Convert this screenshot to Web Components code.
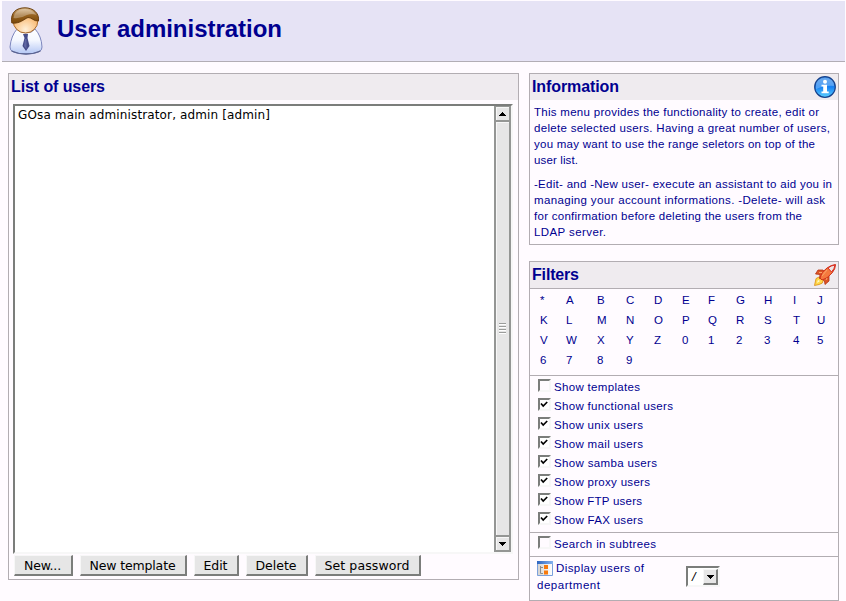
<!DOCTYPE html>
<html lang="en"><head><meta charset="utf-8"><title>User administration</title>
<style>
body{margin:0;width:846px;height:601px;overflow:hidden;background:#fffbff;color:#000090;font:11.5px/16px "Liberation Sans",Arial,sans-serif}
</style></head><body><admin-page></admin-page>
<script>
const make=(name,html,init)=>customElements.define(name,class extends HTMLElement{
  connectedCallback(){
    if(this.shadowRoot)return;
    this.attachShadow({mode:'open'}).innerHTML=html;
    if(init)init.call(this,this.shadowRoot);
  }
});

// One line of text, tracked so that it spans exactly `w` pixels.
make('fit-text','<style>:host{display:block;white-space:nowrap}span{display:inline-block}</style><span><slot></slot></span>',function(r){
  const s=r.querySelector('span'),n=this.textContent.length;
  s.style.letterSpacing='0px';
  const w=s.getBoundingClientRect().width;
  s.style.letterSpacing=((+this.getAttribute('w')-w)/Math.max(1,n-1))+'px';
});

make('user-icon',`<style>:host,svg{display:block}</style><svg width="36" height="48" viewBox="0 0 36 48">
<defs><linearGradient id="b" x1="0" y1="0" x2="0" y2="1"><stop offset="0" stop-color="#fff"/><stop offset=".45" stop-color="#f4f7ff"/><stop offset="1" stop-color="#b3c6f4"/></linearGradient>
<radialGradient id="f" cx=".5" cy=".85" r=".7"><stop offset="0" stop-color="#fff0d8"/><stop offset="1" stop-color="#f8ae5c"/></radialGradient>
<linearGradient id="h" x1="0" y1="0" x2="0" y2="1"><stop offset="0" stop-color="#d9b888"/><stop offset=".5" stop-color="#96621f"/><stop offset="1" stop-color="#7a4708"/></linearGradient></defs>
<path d="M8 22Q2 29 1 40Q.5 43 4.500 45Q9 47 17 47Q25 47 29.500 45Q33.500 43 33 40Q32.500 29 26 22Q23 26 17 26Q12 26 8 22Z" fill="url(#b)" stroke="#7c86bd" stroke-width="1"/>
<path d="M2.500 44Q9 47 17 47Q25 47 31.500 44" fill="none" stroke="#5b638f" stroke-width="1.300"/>
<path d="M14 27H19L18.500 31L20.500 39L17 44L13.500 39L15.500 31Z" fill="#454c88"/><path d="M16 32L17.500 32L17.500 42L15 39Z" fill="#6068a4"/>
<ellipse cx="16.500" cy="14" rx="12.300" ry="12" fill="url(#f)" stroke="#a96a29"/>
<path d="M2.800 16C1 5 8 .8 16 .8C24 .8 30.500 6 29.500 14C25 14.500 22 10 19 10.500C15 12 11 17 2.800 16Z" fill="url(#h)" stroke="#6b400f"/>
<path d="M5.500 7Q9 2 16 2Q23 2 27.500 8Q23 6 18 8Q11 12 4.500 11Z" fill="#fff" opacity=".3"/></svg>`);

make('info-icon',`<style>:host,svg{display:block}</style><svg width="22" height="22" viewBox="0 0 22 22"><defs><linearGradient id="g" x1="0" y1="0" x2="0" y2="1"><stop offset="0" stop-color="#3f8fe8"/><stop offset=".5" stop-color="#1680f2"/><stop offset="1" stop-color="#5bd0ff"/></linearGradient></defs>
<circle cx="11" cy="11" r="10.300" fill="url(#g)" stroke="#15418c" stroke-width="1.200"/>
<path d="M2 10Q2 2 11 2Q20 2 20 10Q12 9 2 13Z" fill="#fff" opacity=".25"/>
<circle cx="11" cy="5.700" r="2" fill="#fff"/><path d="M7.500 8.700H13V15.500H14.700V17.200H7.500V15.500H9.200V10.400H7.500Z" fill="#fff"/></svg>`);

make('rocket-icon',`<style>:host,svg{display:block}</style><svg width="22" height="22" viewBox="0 0 22 22">
<path d="M5 13Q1 14 1.500 17L.5 21.500L5 20.500Q9 20 9.500 16Z" fill="#ffd84a" stroke="#d88b12" stroke-width=".8"/><path d="M4 16L3 19L6 17Z" fill="#fffbd0"/>
<path d="M9 6L4 6L1.500 10L6 10.500L5.500 14.500L8 15L10.500 17L11 20.500L15 17L15 12Z" fill="#dd5526" stroke="#b33213" stroke-width=".8"/>
<path d="M6 14Q7 8 13 4Q17 1 21.500 .5Q21.500 5 18 9Q13 15 8 16Z" fill="#f5793e" stroke="#ce2f1b"/>
<path d="M14 4Q17 1.500 21 1Q20.500 5 17.500 8Z" fill="#eee5e5" stroke="#d92b20"/><path d="M8 12L13 6M5 8.500L8 8.500M12 16L13 14" stroke="#f9a56a" stroke-width="1"/></svg>`);

make('tree-icon',`<style>:host,svg{display:block}</style><svg width="16" height="16" viewBox="0 0 16 16"><defs><linearGradient id="t"><stop stop-color="#2d65c0"/><stop offset="1" stop-color="#86b3ee"/></linearGradient><linearGradient id="p"><stop stop-color="#d4d2d0"/><stop offset="1" stop-color="#fff"/></linearGradient></defs>
<path d="M.5 .5H15.500V14.500H.5Z" fill="url(#p)" stroke="#7ba0dc"/><path d="M0 0H16V3H0Z" fill="url(#t)"/>
<path d="M3.500 5V12.500H6M3.500 6.500H6" fill="none" stroke="#8c8c8c"/><path d="M7 4H11V8H7ZM7 9.500H11V13.500H7Z" fill="#f7790c"/></svg>`);

make('page-header',`<style>:host{display:flex;align-items:flex-start;box-sizing:border-box;height:61px;margin:0 1px 0 2px;padding:6px 0 0 7px;background:#e6e3f5;border-bottom:1px solid #b2adb5}
fit-text{font:bold 24px/30px "Liberation Sans",Arial,sans-serif;margin:7px 0 0 12px}</style><user-icon></user-icon><fit-text w="225">User administration</fit-text>`);

make('titled-panel',`<style>:host{display:flex;flex-direction:column;box-sizing:border-box;border:1px solid #b2adb2}
header{display:flex;justify-content:space-between;align-items:center;height:26px;box-sizing:border-box;padding:0 2px;background:#efebef;font:bold 16px/20px "Liberation Sans",Arial,sans-serif;flex:none}
:host([ruled]) header{height:27px;border-bottom:1px solid #b2adb2}</style><header><slot name="title"></slot><slot name="icon"></slot></header><slot></slot>`);

make('push-button',`<style>:host{display:flex;align-items:center;justify-content:center;box-sizing:border-box;height:21px;border:solid;border-width:1px 2px 2px 1px;border-color:#f7f7f7 #7b7d7b #7b7d7b #f7f7f7;background:#e6e6e6;color:#000;font:12.5px/17px "DejaVu Sans",sans-serif;padding-right:1px}</style><slot></slot>`);

make('scroll-bar',`<style>:host{display:flex;flex-direction:column;width:17px;box-sizing:border-box;border:solid #949694;border-width:0 2px 2px;background:#949694;gap:2px;padding-top:1px}
div{background:#e6e6e6;box-shadow:inset 1px 1px #f7f7f7;display:flex;align-items:center;justify-content:center}
.b{height:13px;flex:none}.t{flex:1;flex-direction:column;gap:1px;padding-top:2px}svg{display:block}.t i{width:7px;height:1px;background:#9a9c9a;border-bottom:1px solid #fff;margin-top:-1px;margin-bottom:1px}</style>
<div class="b"><svg width="7" height="4"><path d="M3 0H4V1H5V2H6V3H7V4H0V3H1V2H2V1H3Z"/></svg></div><div class="t"><i></i><i></i><i></i><i></i></div><div class="b"><svg width="7" height="4"><path d="M0 0H7V1H6V2H5V3H4V4H3V3H2V2H1V1H0Z"/></svg></div>`);

make('user-list',`<style>:host{display:flex;justify-content:space-between;box-sizing:border-box;height:450px;margin:4px 5px 0 4px;border:2px solid;border-color:#7b7d7b #f7f7f7 #f7f7f7 #7b7d7b;background:#fff;color:#000;font:12px/16px "DejaVu Sans",sans-serif}
fit-text{padding:1px 0 0 3px}</style><slot></slot><scroll-bar></scroll-bar>`,function(r){r.querySelector('slot').innerHTML='<fit-text w="252">GOsa main administrator, admin [admin]</fit-text>'});

make('check-row',`<style>:host{display:flex;height:19px;align-items:flex-start}
i{box-sizing:border-box;width:13px;height:13px;border:2px solid;border-color:#7b7d7b #f7f7f7 #f7f7f7 #7b7d7b;margin-right:3px;flex:none;background:#fffbff}
i.on{background:#fff}svg{display:block}</style><i></i><slot></slot>`,function(r){if(this.hasAttribute('checked')){const i=r.querySelector('i');i.className='on';i.innerHTML='<svg width="9" height="9"><path d="M1 3.500L3.200 6L7.200 2" fill="none" stroke="#000" stroke-width="1.700"/></svg>'}});

make('letter-grid',`<style>:host{display:grid;grid-template-columns:26px 31px 29px 28px 28px 26px 28px 28px 29px 24px 18px;grid-auto-rows:20px;line-height:20px;height:87px;box-sizing:border-box;padding:1px 0 0 10px;border-bottom:1px solid #b2adb2}</style>`,function(r){
  for(const c of '*ABCDEFGHIJKLMNOPQRSTUVWXYZ0123456789'){const a=document.createElement('span');a.textContent=c;r.append(a)}
});

make('drop-down',`<style>:host{display:flex;justify-content:space-between;box-sizing:border-box;width:34px;height:21px;border:2px solid;border-color:#7b7d7b #f7f7f7 #f7f7f7 #7b7d7b;background:#fff;color:#000;font:italic 13px/16px "Liberation Sans",sans-serif;padding:1px 0 0 4px}
b{display:flex;align-items:center;justify-content:center;box-sizing:border-box;width:15px;height:16px;border:solid;border-width:1px 2px 2px 1px;border-color:#f7f7f7 #7b7d7b #7b7d7b #f7f7f7;background:#e6e6e6}</style><slot></slot><b><svg width="7" height="4"><path d="M0 0H7V1H6V2H5V3H4V4H3V3H2V2H1V1H0Z"/></svg></b>`);

const checks=[['Show templates',86,0],['Show functional users',119,1],['Show unix users',89,1],['Show mail users',89,1],['Show samba users',103,1],['Show proxy users',96,1],['Show FTP users',88,1],['Show FAX users',89,1]]
 .map(([t,w,c])=>`<check-row ${c?'checked':''}><fit-text w="${w}">${t}</fit-text></check-row>`).join('');
const lines=a=>a.map(([t,w])=>`<fit-text w="${w}">${t}</fit-text>`).join('');
const buttons=[['New...',37,59],['New template',86,107],['Edit',24,45],['Delete',41,62],['Set password',85,106]]
 .map(([t,w,b])=>`<push-button style="width:${b}px"><fit-text w="${w}">${t}</fit-text></push-button>`).join('');

make('admin-page',`<style>:host{display:block;padding-top:1px}
main{display:grid;grid-template-columns:511px 310px;column-gap:10px;padding:11px 0 0 8px;align-items:start}
.left{height:507px}aside{display:grid;gap:16px}.info{height:172px}.filters{height:340px}
nav{display:flex;gap:7px;padding:1px 0 0 5px}
.copy{display:grid;gap:8px;padding:4px 0 0 4px}
.checks{height:157px;box-sizing:border-box;padding:3px 0 0 8px;border-bottom:1px solid #b2adb2}
.checks fit-text,.search fit-text{line-height:17px}
.search{height:24px;box-sizing:border-box;padding:3px 0 0 8px;border-bottom:1px solid #b2adb2}
.dept{display:grid;grid-template-columns:149px auto;padding:3px 0 0 7px;justify-content:start}
.dept>div{display:grid;grid-template-columns:19px auto;line-height:17px}.dept tree-icon{margin-top:1px}.wide{grid-column:1/3}
drop-down{margin-top:6px}</style>
<page-header></page-header><main>
<titled-panel class="left"><fit-text slot="title" w="94">List of users</fit-text><user-list></user-list><nav>${buttons}</nav></titled-panel>
<aside><titled-panel class="info"><fit-text slot="title" w="87">Information</fit-text><info-icon slot="icon"></info-icon><div class="copy">
<div>${lines([['This menu provides the functionality to create, edit or',285],['delete selected users. Having a great number of users,',296],['you may want to use the range seletors on top of the',281],['user list.',44]])}</div>
<div>${lines([['-Edit- and -New user- execute an assistant to aid you in',298],['managing your account informations. -Delete- will ask',291],['for confirmation before deleting the users from the',268],['LDAP server.',72]])}</div></div></titled-panel>
<titled-panel class="filters" ruled><fit-text slot="title" w="47">Filters</fit-text><rocket-icon slot="icon"></rocket-icon><letter-grid></letter-grid>
<div class="checks">${checks}</div><div class="search"><check-row><fit-text w="102">Search in subtrees</fit-text></check-row></div>
<div class="dept"><div><tree-icon></tree-icon><fit-text w="88">Display users of</fit-text><fit-text class="wide" w="63">department</fit-text></div><drop-down>/</drop-down></div></titled-panel></aside></main>`);
</script></body></html>
